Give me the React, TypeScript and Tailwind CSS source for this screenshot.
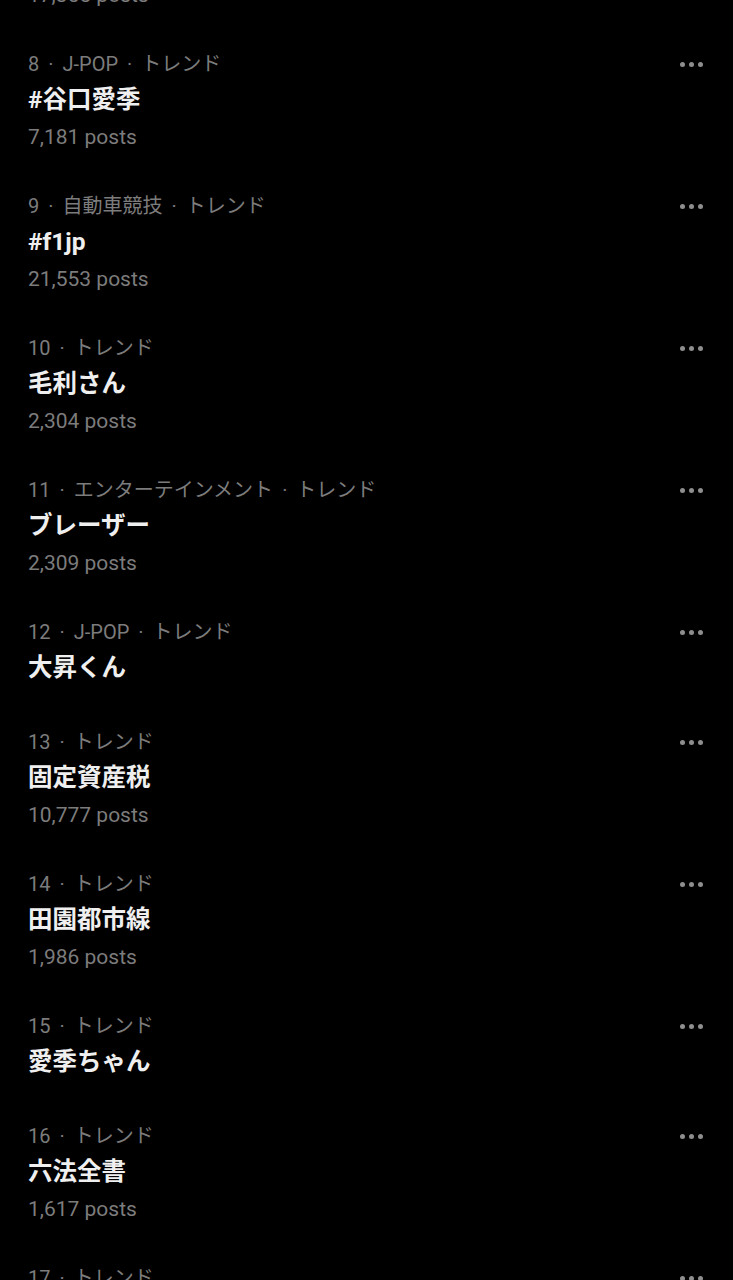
import React from "react";

type Item = { rank: number; cats: string[]; title: string; posts?: string };

const items: Item[] = [
  { rank: 8, cats: ["J-POP", "トレンド"], title: "#谷口愛季", posts: "7,181 posts" },
  { rank: 9, cats: ["自動車競技", "トレンド"], title: "#f1jp", posts: "21,553 posts" },
  { rank: 10, cats: ["トレンド"], title: "毛利さん", posts: "2,304 posts" },
  { rank: 11, cats: ["エンターテインメント", "トレンド"], title: "ブレーザー", posts: "2,309 posts" },
  { rank: 12, cats: ["J-POP", "トレンド"], title: "大昇くん" },
  { rank: 13, cats: ["トレンド"], title: "固定資産税", posts: "10,777 posts" },
  { rank: 14, cats: ["トレンド"], title: "田園都市線", posts: "1,986 posts" },
  { rank: 15, cats: ["トレンド"], title: "愛季ちゃん" },
  { rank: 16, cats: ["トレンド"], title: "六法全書", posts: "1,617 posts" },
  { rank: 17, cats: ["トレンド"], title: "トレンド", posts: "1,000 posts" },
];

const Sep = () => <span className="mx-[9px] inline-block">·</span>;

function Dots() {
  return (
    <div className="h-[30px] flex items-center gap-[4px] pt-[1px]">
      <span className="w-[5px] h-[5px] rounded-full bg-[#8e8e8e]" />
      <span className="w-[5px] h-[5px] rounded-full bg-[#8e8e8e]" />
      <span className="w-[5px] h-[5px] rounded-full bg-[#8e8e8e]" />
    </div>
  );
}

function Row({ item }: { item: Item }) {
  return (
    <div className="flex justify-between items-start pl-[28px] pr-[30px] py-[19px] shrink-0">
      <div className="flex flex-col">
        <div className="text-[20px] leading-[30px] text-[#7c7c7c] whitespace-nowrap">
          {item.rank}
          {item.cats.map((c, i) => (
            <React.Fragment key={i}>
              <Sep />
              {c}
            </React.Fragment>
          ))}
        </div>
        <div className="text-[24.5px] leading-[42px] font-bold text-[#efefef] whitespace-nowrap">
          {item.title}
        </div>
        {item.posts && (
          <div className="text-[21px] leading-[32px] text-[#7c7c7c] whitespace-nowrap">{item.posts}</div>
        )}
      </div>
      <Dots />
    </div>
  );
}

export default function App() {
  return (
    <div
      className="w-full h-[1280px] bg-black overflow-hidden flex flex-col"
      style={{ fontFamily: '"Roboto", "Noto Sans CJK JP", sans-serif' }}
    >
      <div className="shrink-0 mt-[-21px] pl-[28px] pb-[19px]">
        <div className="text-[21px] leading-[32px] text-[#7c7c7c]">17,355 posts</div>
      </div>
      {items.map((it) => (
        <Row key={it.rank} item={it} />
      ))}
    </div>
  );
}
